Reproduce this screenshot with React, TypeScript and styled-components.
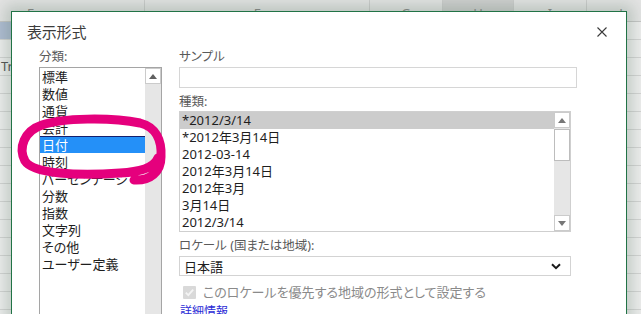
import React from "react";
import styled, { createGlobalStyle } from "styled-components";

const GlobalStyle = createGlobalStyle`
  html, body {
    margin: 0;
    padding: 0;
    overflow: hidden;
    background: #fff;
  }
  body {
    font-family: "Noto Sans", "Noto Sans CJK JP", sans-serif;
  }
`;

const columns = [
  { name: "E", width: 228 },
  { name: "F", width: 225 },
  { name: "G", width: 73 },
  { name: "H", width: 71, selected: true },
  { name: "I", width: 73 },
  { name: "J", width: 69 },
];

const categories = [
  "標準",
  "数値",
  "通貨",
  "会計",
  "日付",
  "時刻",
  "パーセンテージ",
  "分数",
  "指数",
  "文字列",
  "その他",
  "ユーザー定義",
];

const types = [
  "*2012/3/14",
  "*2012年3月14日",
  "2012-03-14",
  "2012年3月14日",
  "2012年3月",
  "3月14日",
  "2012/3/14",
];

const App = () => {
  return (
    <>
      <GlobalStyle />
      <Page>
        <Sheet>
          <HeaderRow>
            {columns.map((c) => (
              <ColHead key={c.name} $w={c.width} $selected={!!c.selected}>
                {c.name}
              </ColHead>
            ))}
          </HeaderRow>
          {Array.from({ length: 17 }).map((_, i) => (
            <GridRow key={i}>
              {columns.map((c, j) => (
                <Cell key={c.name} $w={c.width} $active={i === 0 && j === 0}>
                  {i === 2 && j === 0 ? "Tr" : ""}
                </Cell>
              ))}
            </GridRow>
          ))}
        </Sheet>

        <Dialog>
          <TitleBar>
            <Title>表示形式</Title>
            <CloseButton aria-label="close">
              <svg width="10" height="10" viewBox="0 0 10 10">
                <path d="M0.5 0.5 L9.5 9.5 M9.5 0.5 L0.5 9.5" stroke="#3a3a3a" strokeWidth="1.1" />
              </svg>
            </CloseButton>
          </TitleBar>

          <Body>
            <LeftColumn>
              <Label>分類:</Label>
              <CategoryList>
                <Items>
                  {categories.map((c) => (
                    <CategoryItem key={c} $selected={c === "日付"}>
                      {c}
                    </CategoryItem>
                  ))}
                </Items>
                <ScrollTrack>
                  <ScrollButton>
                    <svg width="8" height="5" viewBox="0 0 8 5">
                      <polygon points="0,5 8,5 4,0" fill="#606060" />
                    </svg>
                  </ScrollButton>
                </ScrollTrack>
              </CategoryList>
            </LeftColumn>

            <RightColumn>
              <Label>サンプル</Label>
              <SampleBox />

              <Label $top={6} $bottom={1}>種類:</Label>
              <TypeList>
                <Items>
                  {types.map((t, i) => (
                    <TypeItem key={i} $selected={i === 0}>
                      {t}
                    </TypeItem>
                  ))}
                </Items>
                <ScrollTrack>
                  <ScrollButton>
                    <svg width="8" height="5" viewBox="0 0 8 5">
                      <polygon points="0,5 8,5 4,0" fill="#777" />
                    </svg>
                  </ScrollButton>
                  <Thumb />
                  <TrackFill />
                  <ScrollButton>
                    <svg width="8" height="5" viewBox="0 0 8 5">
                      <polygon points="0,0 8,0 4,5" fill="#777" />
                    </svg>
                  </ScrollButton>
                </ScrollTrack>
              </TypeList>

              <Label $top={6}>ロケール (国または地域):</Label>
              <Select>
                <span>日本語</span>
                <svg width="10" height="7" viewBox="0 0 10 7">
                  <path d="M1 1.2 L5 5.2 L9 1.2" fill="none" stroke="#1a1a1a" strokeWidth="2" />
                </svg>
              </Select>

              <CheckRow>
                <CheckBox>
                  <svg width="13" height="13" viewBox="0 0 13 13">
                    <rect x="0" y="0" width="13" height="13" rx="1" fill="#d9d9d9" />
                    <path d="M2.8 6.6 L5.3 9.2 L10.2 3.6" fill="none" stroke="#f4f4f4" strokeWidth="1.8" />
                  </svg>
                </CheckBox>
                <CheckLabel>このロケールを優先する地域の形式として設定する</CheckLabel>
              </CheckRow>

              <Link>詳細情報</Link>
            </RightColumn>
          </Body>
        </Dialog>

        <Scribble viewBox="0 0 641 314" width="641" height="314">
          <path
            d="M134 180 C150 181 161 172 161 157 C162 140 156 127 140 123 C110 117 62 118 42 125 C24 131 18 148 25 161 C33 174 78 176 120 173 C140 172 154 168 158 158"
            fill="none"
            stroke="#e5007d"
            strokeWidth="9"
            strokeLinecap="round"
            strokeLinejoin="round"
          />
        </Scribble>
      </Page>
    </>
  );
};

export default App;

const Page = styled.div`
  position: relative;
  width: 641px;
  height: 314px;
  overflow: hidden;
  background: #fff;
`;

const Sheet = styled.div`
  display: flex;
  flex-direction: column;
  width: 800px;
  margin-left: -83px;
`;

const HeaderRow = styled.div`
  display: flex;
  height: 22px;
  background: #e4e4e4;
  border-bottom: 1px solid #c6c6c6;
  box-sizing: border-box;
`;

const ColHead = styled.div<{ $w: number; $selected: boolean }>`
  flex: 0 0 ${(p) => p.$w}px;
  box-sizing: border-box;
  border-right: 1px solid #cdcdcd;
  background: ${(p) => (p.$selected ? "#d0d0d0" : "transparent")};
  color: #8a8a8a;
  font-family: "Noto Sans", sans-serif;
  font-size: 13px;
  line-height: 22px;
  padding-top: 2px;
  text-align: center;
`;

const GridRow = styled.div`
  display: flex;
  height: 18px;
  box-sizing: border-box;
  border-bottom: 1px solid #d4d4d4;
`;

const Cell = styled.div<{ $w: number; $active: boolean }>`
  flex: 0 0 ${(p) => p.$w}px;
  box-sizing: border-box;
  border-right: 1px solid #d4d4d4;
  background: ${(p) => (p.$active ? "#b0bdd3" : "#eeeeee")};
  color: #555;
  font-family: "Noto Sans", sans-serif;
  font-size: 13px;
  line-height: 17px;
  padding-left: 84px;
  overflow: hidden;
  white-space: nowrap;
`;

const Dialog = styled.div`
  position: absolute;
  left: 11px;
  top: 11px;
  width: 616px;
  height: 340px;
  box-sizing: border-box;
  background: #fff;
  border: 1px solid #217346;
  box-shadow: 0 0 14px 6px rgba(60, 95, 70, 0.24);
  font-family: "Noto Sans", "Noto Sans CJK JP", sans-serif;
  font-feature-settings: "palt";
  display: flex;
  flex-direction: column;
`;

const TitleBar = styled.div`
  display: flex;
  align-items: center;
  justify-content: space-between;
  padding: 9px 19px 0 15px;
  height: 22px;
`;

const Title = styled.div`
  font-size: 15px;
  line-height: 22px;
  color: #3c3c3c;
  letter-spacing: -0.2px;
`;

const CloseButton = styled.div`
  width: 10px;
  height: 10px;
  display: flex;
`;

const Body = styled.div`
  display: flex;
  gap: 17px;
  padding-left: 27px;
  margin-top: 6px;
  flex: 1;
  min-height: 0;
`;

const LeftColumn = styled.div`
  width: 123px;
  display: flex;
  flex-direction: column;
`;

const RightColumn = styled.div`
  width: 398px;
  display: flex;
  flex-direction: column;
`;

const Label = styled.div<{ $top?: number; $bottom?: number }>`
  font-size: 12.5px;
  line-height: 16px;
  color: #5a5a5a;
  margin-top: ${(p) => p.$top ?? 0}px;
  margin-bottom: ${(p) => p.$bottom ?? 2}px;
  white-space: nowrap;
`;

const CategoryList = styled.div`
  flex: 1;
  display: flex;
  border: 1px solid #a5a5a5;
  background: #fff;
`;

const Items = styled.div`
  flex: 1;
  display: flex;
  flex-direction: column;
  min-width: 0;
`;

const CategoryItem = styled.div<{ $selected: boolean }>`
  height: 17px;
  box-sizing: border-box;
  line-height: 16px;
  font-size: 13px;
  padding-left: 2px;
  color: ${(p) => (p.$selected ? "#fff" : "#1e1e1e")};
  background: ${(p) => (p.$selected ? "#2490f8" : "transparent")};
  border-top: 1px solid ${(p) => (p.$selected ? "#14206e" : "transparent")};
  white-space: nowrap;
`;

const ScrollTrack = styled.div`
  width: 16px;
  display: flex;
  flex-direction: column;
  background: #e6e6e6;
`;

const ScrollButton = styled.div`
  height: 16px;
  box-sizing: border-box;
  background: #fff;
  border: 1px solid #cbcbcb;
  display: flex;
  align-items: center;
  justify-content: center;
`;

const Thumb = styled.div`
  height: 32px;
  margin-top: 1px;
  box-sizing: border-box;
  background: #fff;
  border: 1px solid #bdbdbd;
`;

const TrackFill = styled.div`
  flex: 1;
`;

const SampleBox = styled.div`
  height: 21px;
  box-sizing: border-box;
  border: 1px solid #d6d6d6;
  background: #fff;
`;

const TypeList = styled.div`
  width: 392px;
  height: 121px;
  box-sizing: border-box;
  display: flex;
  border: 1px solid #cfcfcf;
  background: #fff;
`;

const TypeItem = styled.div<{ $selected: boolean }>`
  height: 17px;
  line-height: 17px;
  font-size: 13px;
  padding-left: 2px;
  color: #1e1e1e;
  background: ${(p) => (p.$selected ? "#cccccc" : "transparent")};
  white-space: nowrap;
`;

const Select = styled.div`
  width: 392px;
  height: 20px;
  box-sizing: border-box;
  border: 1px solid #d3d3d3;
  display: flex;
  align-items: center;
  justify-content: space-between;
  padding: 0 9px 0 4px;
  font-size: 13px;
  color: #1e1e1e;
`;

const CheckRow = styled.div`
  display: flex;
  align-items: center;
  gap: 7px;
  margin-top: 8px;
  padding-left: 4px;
`;

const CheckBox = styled.div`
  width: 13px;
  height: 13px;
  display: flex;
`;

const CheckLabel = styled.div`
  font-size: 13px;
  line-height: 16px;
  color: #8a8a8a;
  white-space: nowrap;
`;

const Link = styled.div`
  margin-top: 4px;
  padding-left: 1px;
  font-size: 12px;
  line-height: 16px;
  color: #2b2bd6;
`;

const Scribble = styled.svg`
  position: absolute;
  left: 0;
  top: 0;
  pointer-events: none;
`;
